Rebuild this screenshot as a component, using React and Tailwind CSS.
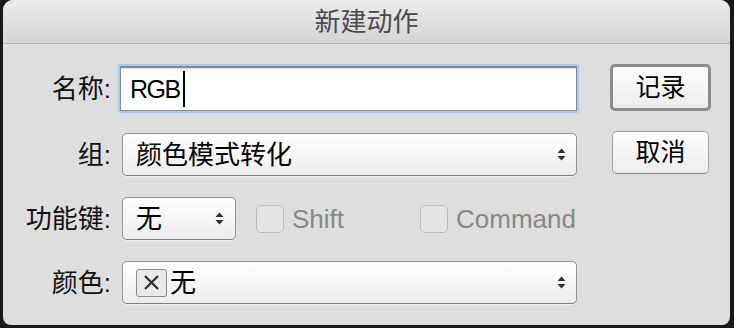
import React from "react";

const cjk = { fontFamily: '"Liberation Sans", "Noto Sans CJK SC", sans-serif' };

function Arrows() {
  return (
    <svg width="9" height="13" viewBox="0 0 9 13" className="shrink-0">
      <path d="M4.5 0.5 L8.5 5 H0.5 Z" fill="#2e2e2e" />
      <path d="M0.5 8 H8.5 L4.5 12.5 Z" fill="#2e2e2e" />
    </svg>
  );
}

function Select({ width, children, arrowPad = "pr-[10px]" }) {
  return (
    <div
      className={`flex h-[43px] items-center justify-between rounded-[5px] border-[1.5px] border-[#939393] border-b-[#7c7c7c] bg-linear-to-b from-[#ffffff] to-[#ececec] pl-[13px] ${arrowPad} shadow-[0_1px_0_rgba(255,255,255,0.5)]`}
      style={{ width }}
    >
      <div className="flex items-center text-[26px] leading-none text-black">{children}</div>
      <Arrows />
    </div>
  );
}

function Check({ label }) {
  return (
    <div className="flex items-center">
      <div className="h-[28px] w-[28px] rounded-[5px] border-[1.5px] border-[#bcbcbc] bg-[#e4e4e4]" />
      <span className="ml-[8px] text-[26px] leading-none text-[#888888]">{label}</span>
    </div>
  );
}

function Label({ children }) {
  return (
    <div className="w-[108px] shrink-0 text-right text-[26px] leading-none text-[#111]">{children}</div>
  );
}

export default function App() {
  return (
    <div className="h-[328px] w-[734px] bg-[#1c1818] pl-[3px] pr-[4px] pb-[3px]" style={cjk}>
      <div className="flex h-[325px] w-[727px] flex-col overflow-hidden rounded-t-[10px] rounded-b-[8px] bg-[#dedede]">
        <div className="flex h-[44px] shrink-0 items-center justify-center border-b border-[#b2b2b2] bg-linear-to-b from-[#ececec] to-[#d5d5d5] text-[26px] leading-none text-[#4b4b4b]">
          新建动作
        </div>

        <div className="flex">
          <div className="w-[576px] shrink-0">
            <div className="mt-[20px] flex h-[49px] items-center">
              <Label>名称:</Label>
              <div className="ml-[7px] h-[49px] w-[461px] rounded-[2px] bg-[#a7cbf1] p-[2px]">
                <div className="flex h-full items-center border-x border-b border-t-2 border-[#8a8a8a] bg-white pl-[9px] shadow-[inset_0_1px_1px_rgba(0,0,0,0.12)]">
                  <span className="text-[25px] leading-none tracking-[-1.5px] text-black">RGB</span>
                  <span className="ml-[3px] h-[36px] w-[2px] bg-black" />
                </div>
              </div>
            </div>

            <div className="mt-[20px] flex items-center">
              <Label>组:</Label>
              <div className="ml-[11px]">
                <Select width={455}>颜色模式转化</Select>
              </div>
            </div>

            <div className="mt-[21px] flex items-center">
              <Label>功能键:</Label>
              <div className="ml-[11px]">
                <Select width={114} arrowPad="pr-[11px]">无</Select>
              </div>
              <div className="ml-[20px] w-[164px]">
                <Check label="Shift" />
              </div>
              <Check label="Command" />
            </div>

            <div className="mt-[21px] flex items-center">
              <Label>颜色:</Label>
              <div className="ml-[11px]">
                <Select width={455}>
                  <span className="flex h-[28px] w-[31px] items-center justify-center rounded-[3px] border-[1.5px] border-[#8c8c8c] bg-[#e9e9e9]">
                    <svg width="17" height="17" viewBox="0 0 17 17">
                      <path d="M2 2 L15 15 M15 2 L2 15" stroke="#2e2e2e" strokeWidth="2.2" />
                    </svg>
                  </span>
                  <span className="ml-[3px]">无</span>
                </Select>
              </div>
            </div>
          </div>

          <div className="ml-[31px] flex w-[101px] flex-col items-center">
            <button className="mt-[20px] flex h-[47px] w-[101px] items-center justify-center rounded-[5px] border-[3px] border-[#8b8b8b] bg-linear-to-b from-[#fdfdfd] to-[#ececec] text-[25px] leading-none text-black">
              记录
            </button>
            <button className="mt-[20px] flex h-[43px] w-[97px] items-center justify-center rounded-[5px] border-[1.5px] border-[#a0a0a0] border-b-[#838383] bg-linear-to-b from-[#fdfdfd] to-[#ededed] text-[25px] leading-none text-black">
              取消
            </button>
          </div>
        </div>
      </div>
    </div>
  );
}
